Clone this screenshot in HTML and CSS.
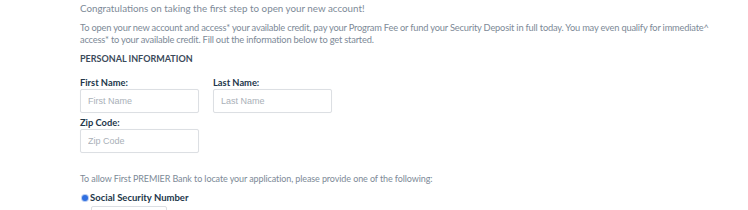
FILE: index.html
```html
<!DOCTYPE html>
<html>
<head>
<meta charset="utf-8">
<link rel="stylesheet" href="styles.css">
</head>
<body>
<div class="page">
  <p class="intro">Congratulations on taking the first step to open your new account!</p>
  <p class="lead">To open your new account and access* your available credit, pay your Program Fee or fund your Security Deposit in full today. You may even qualify for immediate^ access* to your available credit. Fill out the information below to get started.</p>
  <h2 class="section">PERSONAL INFORMATION</h2>
  <div class="fields">
    <div class="field">
      <label class="label">First Name:</label>
      <input class="input" type="text" placeholder="First Name">
    </div>
    <div class="field">
      <label class="label">Last Name:</label>
      <input class="input" type="text" placeholder="Last Name">
    </div>
    <div class="field">
      <label class="label">Zip Code:</label>
      <input class="input" type="text" placeholder="Zip Code">
    </div>
  </div>
  <p class="locate">To allow First PREMIER Bank to locate your application, please provide one of the following:</p>
  <div class="radio-row">
    <span class="radio"></span>
    <span class="radio-label">Social Security Number</span>
  </div>
  <div class="ssn-box"></div>
</div>
</body>
</html>
```
FILE: styles.css
```css
html, body {
  margin: 0;
  padding: 0;
  background: #ffffff;
}
.page {
  padding: 2px 0 0 80px;
  width: 650px;
  font-family: "Lato", "Liberation Sans", sans-serif;
  font-size: 9.5px;
  line-height: 12px;
  color: #7d8a97;
}
.intro {
  margin: 0;
  font-size: 9.8px;
}
.lead {
  margin: 8px 0 0 0;
  font-size: 9.3px;
  letter-spacing: -0.2px;
  line-height: 11.5px;
  width: 645px;
}
.section {
  margin: 8px 0 0 0;
  font-size: 9px;
  line-height: 12px;
  font-weight: 700;
  color: #3b4a5a;
  letter-spacing: 0;
}
.fields {
  display: grid;
  grid-template-columns: 119px 119px;
  column-gap: 14px;
  row-gap: 4px;
  margin-top: 12px;
}
.field {
  display: flex;
  flex-direction: column;
}
.label {
  font-weight: 700;
  color: #22364a;
  line-height: 12px;
  font-size: 9.3px;
}
.input {
  box-sizing: border-box;
  width: 119px;
  height: 24px;
  margin: 0;
  border: 1px solid #dcdfe3;
  border-radius: 2px;
  padding: 0 7px;
  font-family: "Liberation Sans", Arial, sans-serif;
  font-size: 9px;
  color: #555;
  outline: none;
  box-shadow: 0 0 1px rgba(0, 0, 0, 0.05);
}
.input::placeholder {
  color: #a9b0b8;
}
.locate {
  margin: 20px 0 0 0;
  font-size: 9px;
  letter-spacing: -0.1px;
}
.radio-row {
  display: flex;
  align-items: center;
  gap: 2px;
  margin-top: 7px;
  padding-left: 2px;
}
.radio {
  width: 6px;
  height: 6px;
  border-radius: 50%;
  background: #2f6fe0;
  box-shadow: 0 0 0 1px #b9cdf3;
}
.radio-label {
  font-weight: 700;
  color: #22364a;
  font-size: 9.5px;
}
.ssn-box {
  margin: 2px 0 0 11px;
  width: 76px;
  height: 20px;
  box-sizing: border-box;
  border: 1px solid #dcdfe3;
  border-radius: 2px;
}
```
